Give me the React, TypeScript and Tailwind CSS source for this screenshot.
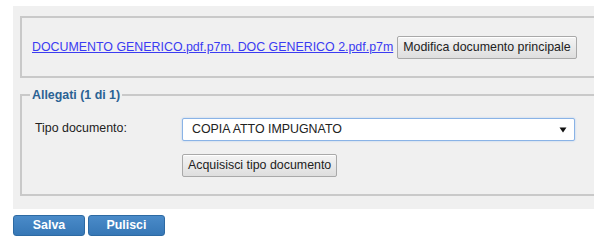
import React from "react";

const grayBtn =
  "h-[23px] px-[5px] border border-[#a9a9a9] rounded-[2px] bg-gradient-to-b from-[#f4f4f4] to-[#dedede] text-[12.4px] text-[#222] leading-none shadow-[inset_0_1px_0_#fff]";

const blueBtn =
  "h-[21px] rounded-[3px] border border-[#2d6aa3] bg-gradient-to-b from-[#4a8bc9] to-[#3677b6] text-white text-[12.4px] font-bold leading-none";

export default function App() {
  return (
    <div className="w-[604px] h-[242px] bg-white font-['Liberation_Sans',Arial,sans-serif]">
      <div className="pt-[6px] pl-[13px]">
        {/* main panel */}
        <div className="w-[581px] h-[203px] bg-[#f0f0f0] pl-[7px] pt-[10px]">
          {/* documento principale */}
          <div className="h-[62px] border-2 border-r-0 border-[#c9c9c9] flex items-center pl-[10px] pt-[1px]">
            <a
              href="#"
              className="text-[12.4px] text-[#3b3bf2] underline leading-none mr-[4px]"
            >
              DOCUMENTO GENERICO.pdf.p7m, DOC GENERICO 2.pdf.p7m
            </a>
            <button className={grayBtn}>Modifica documento principale</button>
          </div>

          {/* allegati */}
          <fieldset className="mt-[10px] h-[108px] border-2 border-r-0 border-[#c9c9c9] pl-[8px]">
            <legend className="px-[2px] text-[12.4px] font-bold text-[#2a6294] leading-[14px]">
              Allegati (1 di 1)
            </legend>
            <div className="flex items-center mt-[16px] ml-[5px]">
              <span className="w-[147px] text-[12.4px] text-[#222] -mt-[3px]">Tipo documento:</span>
              <div className="w-[393px] h-[23px] bg-white border border-[#8ab3e6] rounded-[2px] flex items-center justify-between pl-[9px] pr-[7px] shadow-[0_0_2px_#a9c8f0]">
                <span className="text-[12.4px] text-[#222]">COPIA ATTO IMPUGNATO</span>
                <svg width="8" height="6" viewBox="0 0 8 6">
                  <path d="M0.5 0.5h7L4 5.5z" fill="#111" />
                </svg>
              </div>
            </div>
            <div className="ml-[152px] mt-[11px]">
              <button className={grayBtn}>Acquisisci tipo documento</button>
            </div>
          </fieldset>
        </div>

        {/* azioni */}
        <div className="flex gap-[3px] mt-[6px]">
          <button className={`${blueBtn} w-[72px]`}>Salva</button>
          <button className={`${blueBtn} w-[77px]`}>Pulisci</button>
        </div>
      </div>
    </div>
  );
}
